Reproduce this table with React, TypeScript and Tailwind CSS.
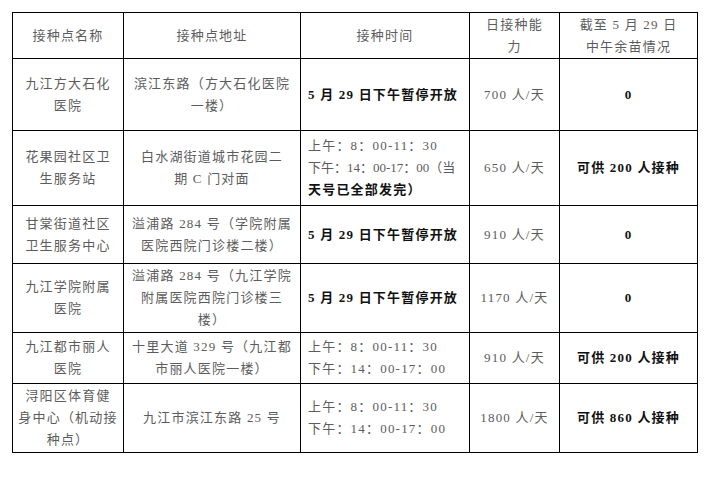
import React from "react";

type Line = { text: string; bold?: boolean; tight?: boolean };
type Cell = { lines: (string | Line)[]; bold?: boolean; left?: boolean };

interface RowData {
  h: string;
  cells: Cell[];
}

const stop = "5 月 29 日下午暂停开放";

const rows: RowData[] = [
  {
    h: "h-[72px]",
    cells: [
      { lines: ["九江方大石化", "医院"] },
      { lines: ["滨江东路（方大石化医院", "一楼）"] },
      { lines: [stop], bold: true, left: true },
      { lines: ["700 人/天"] },
      { lines: ["0"], bold: true },
    ],
  },
  {
    h: "h-[75px]",
    cells: [
      { lines: ["花果园社区卫", "生服务站"] },
      { lines: ["白水湖街道城市花园二", "期 C 门对面"] },
      {
        lines: [
          "上午：8：00-11：30",
          { text: "下午：14：00-17：00（当", tight: true },
          { text: "天号已全部发完）", bold: true },
        ],
        left: true,
      },
      { lines: ["650 人/天"] },
      { lines: ["可供 200 人接种"], bold: true },
    ],
  },
  {
    h: "h-[58px]",
    cells: [
      { lines: ["甘棠街道社区", "卫生服务中心"] },
      { lines: ["溢浦路 284 号（学院附属", "医院西院门诊楼二楼）"] },
      { lines: [stop], bold: true, left: true },
      { lines: ["910 人/天"] },
      { lines: ["0"], bold: true },
    ],
  },
  {
    h: "h-[69px]",
    cells: [
      { lines: ["九江学院附属", "医院"] },
      { lines: ["溢浦路 284 号（九江学院", "附属医院西院门诊楼三", "楼）"] },
      { lines: [stop], bold: true, left: true },
      { lines: ["1170 人/天"] },
      { lines: ["0"], bold: true },
    ],
  },
  {
    h: "h-[51px]",
    cells: [
      { lines: ["九江都市丽人", "医院"] },
      { lines: ["十里大道 329 号（九江都", "市丽人医院一楼）"] },
      { lines: ["上午：8：00-11：30", "下午：14：00-17：00"], left: true },
      { lines: ["910 人/天"] },
      { lines: ["可供 200 人接种"], bold: true },
    ],
  },
  {
    h: "h-[69px]",
    cells: [
      { lines: ["浔阳区体育健", "身中心（机动接", "种点）"] },
      { lines: ["九江市滨江东路 25 号"] },
      { lines: ["上午：8：00-11：30", "下午：14：00-17：00"], left: true },
      { lines: ["1800 人/天"] },
      { lines: ["可供 860 人接种"], bold: true },
    ],
  },
];

const headers: string[][] = [
  ["接种点名称"],
  ["接种点地址"],
  ["接种时间"],
  ["日接种能", "力"],
  ["截至 5 月 29 日", "中午余苗情况"],
];

function CellBody({ cell }: { cell: Cell }) {
  return (
    <>
      {cell.lines.map((l, i) => {
        const line: Line = typeof l === "string" ? { text: l } : l;
        const bold = cell.bold || line.bold;
        return (
          <div
            key={i}
            className={
              (bold ? "font-bold text-[#111]" : "text-[#5c5c5c]") +
              (line.tight ? " tracking-[0px]" : "")
            }
          >
            {line.text}
          </div>
        );
      })}
    </>
  );
}

export default function App() {
  return (
    <div
      className="bg-white w-[725px] h-[477px] pt-[12px] pl-[12px]"
      style={{ fontFamily: '"Liberation Serif", "Noto Sans CJK SC", serif' }}
    >
      <table className="table-fixed border-collapse w-[685px] text-[13px] leading-[22px] tracking-[1.2px]">
        <colgroup>
          <col className="w-[111px]" />
          <col className="w-[177px]" />
          <col className="w-[169px]" />
          <col className="w-[90px]" />
          <col className="w-[138px]" />
        </colgroup>
        <thead>
          <tr className="h-[46px]">
            {headers.map((h, i) => (
              <th
                key={i}
                className="border border-black font-normal text-center align-middle text-[#5c5c5c] p-0"
              >
                {h.map((t, j) => (
                  <div key={j}>{t}</div>
                ))}
              </th>
            ))}
          </tr>
        </thead>
        <tbody>
          {rows.map((r, i) => (
            <tr key={i} className={r.h}>
              {r.cells.map((c, j) => (
                <td
                  key={j}
                  className={
                    c.left
                      ? "border border-black align-middle text-left pl-[7px] pr-0 whitespace-nowrap"
                      : "border border-black align-middle text-center px-0 whitespace-nowrap"
                  }
                >
                  <CellBody cell={c} />
                </td>
              ))}
            </tr>
          ))}
        </tbody>
      </table>
    </div>
  );
}
